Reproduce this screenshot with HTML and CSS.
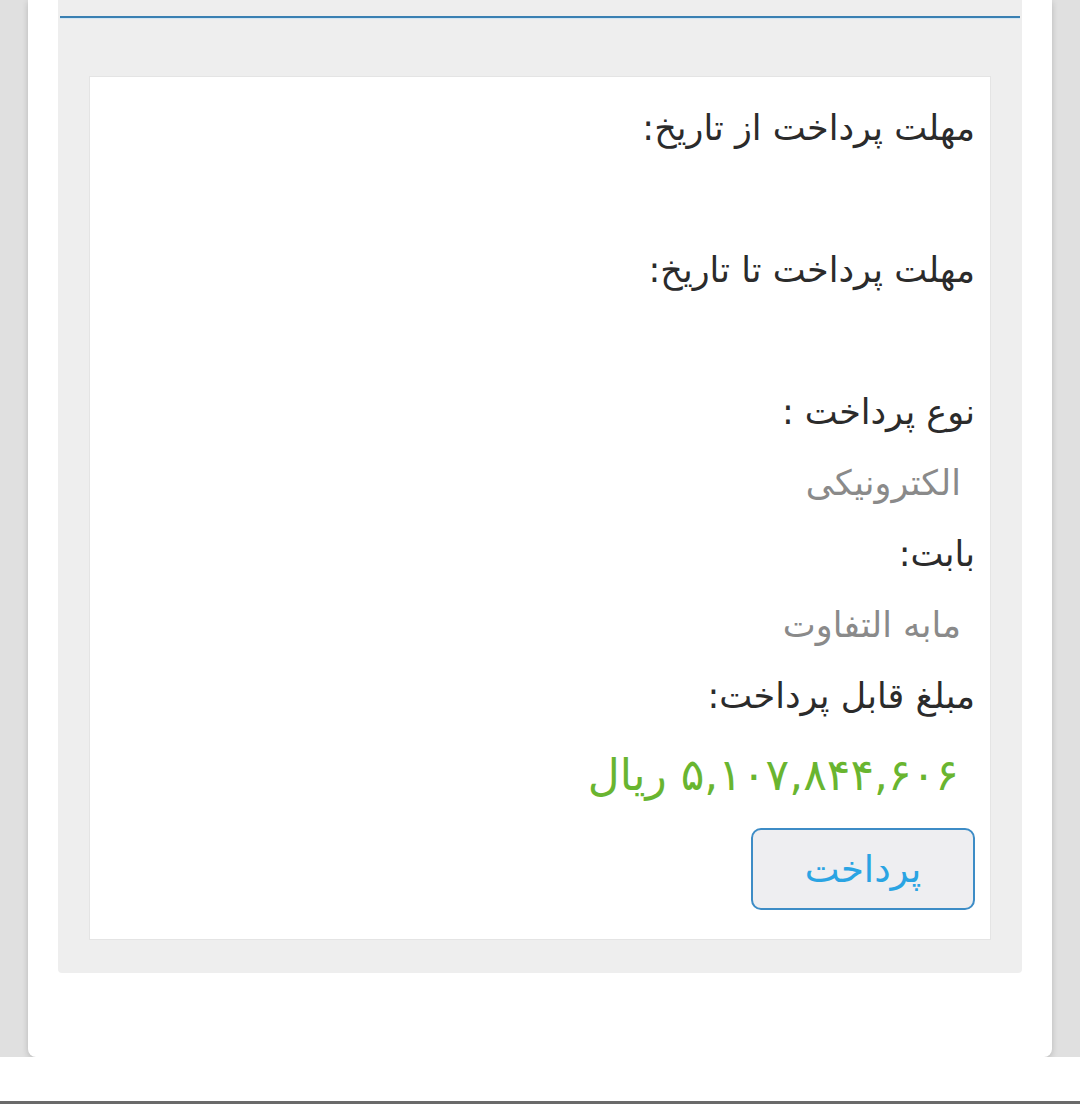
FILE: index.html
```html
<!DOCTYPE html>
<html lang="fa" dir="rtl">
<head>
    <meta charset="UTF-8">
    <meta name="viewport" content="width=device-width, initial-scale=1.0">
    <title>پرداخت</title>
    <link rel="stylesheet" href="styles.css">
</head>
<body>
    <div class="card">
        <div class="panel">
            <div class="panel-head"></div>
            <div class="box">
                <p class="label">مهلت پرداخت از تاریخ:</p>
                <p class="value"></p>
                <p class="label">مهلت پرداخت تا تاریخ:</p>
                <p class="value"></p>
                <p class="label">نوع پرداخت :</p>
                <p class="value">الکترونیکی</p>
                <p class="label">بابت:</p>
                <p class="value">مابه التفاوت</p>
                <p class="label">مبلغ قابل پرداخت:</p>
                <p class="amount">۵,۱۰۷,۸۴۴,۶۰۶ ریال</p>
                <button class="pay-btn">پرداخت</button>
            </div>
        </div>
    </div>
    <div class="bottom-bar"></div>
</body>
</html>
```

FILE: styles.css
```css
* {
    margin: 0;
    padding: 0;
    box-sizing: border-box;
}

body, html {
    background-color: #e0e0e0;
    font-family: "DejaVu Sans", "Liberation Sans", sans-serif;
    overflow: hidden;
}

.card {
    margin: 0 28px;
    height: 1057px;
    padding: 0 30px 85px;
    background-color: #fff;
    border-radius: 0 0 8px 8px;
    box-shadow: 0 2px 6px rgba(0, 0, 0, 0.18);
}

.panel {
    background-color: #eeeeee;
    padding: 0 0 33px;
    border-radius: 0 0 4px 4px;
}

.panel-head {
    height: 18px;
    margin: 0 2px;
    border-bottom: 2px solid #3a80b2;
    box-shadow: 0 1px 0 #d3e6f3;
}

.box {
    margin: 58px 31px 0;
    background-color: #fff;
    border: 1px solid #e4e4e4;
    padding: 16px 15px 29px;
}

.label,
.value {
    height: 71px;
    line-height: 71px;
    font-size: 35px;
    color: #2b2b2b;
    white-space: nowrap;
}

.value {
    color: #8a8a8a;
    padding-right: 14px;
}

.amount {
    height: 86px;
    line-height: 86px;
    margin-bottom: 10px;
    padding-right: 16px;
    font-size: 44px;
    color: #69b530;
    white-space: nowrap;
}

.pay-btn {
    display: block;
    width: 224px;
    height: 82px;
    background-color: #eeeef1;
    border: 2px solid #3d8cc6;
    border-radius: 10px;
    color: #2aa4e3;
    font-family: inherit;
    font-size: 37px;
    cursor: pointer;
}

.bottom-bar {
    height: 47px;
    background-color: #fff;
    border-bottom: 3px solid #6a6a6a;
}
```
